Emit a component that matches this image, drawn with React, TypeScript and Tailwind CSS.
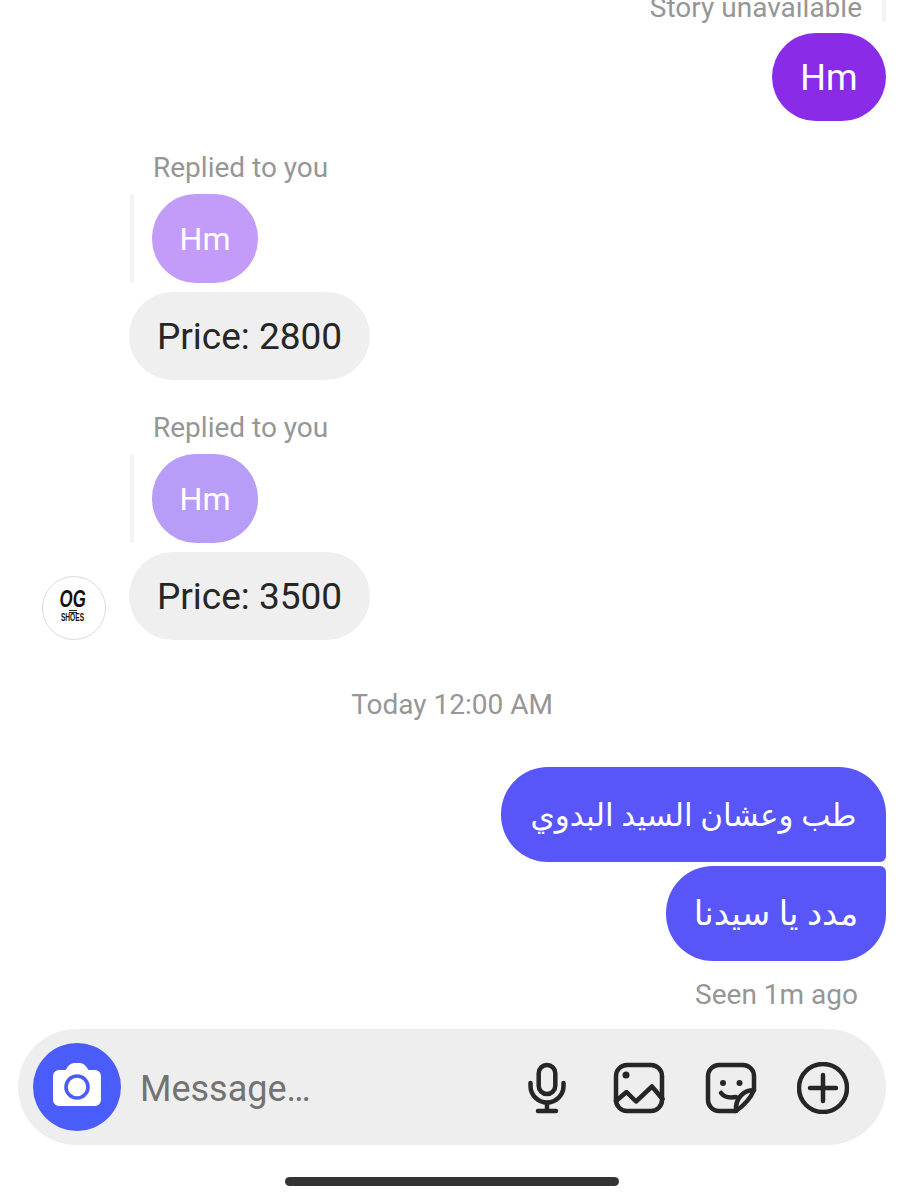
const font = { fontFamily: '"Roboto", "DejaVu Sans", sans-serif' };
const logoFont = { fontFamily: '"Liberation Sans", sans-serif' };

function Mic() {
  return (
    <svg width="52" height="52" viewBox="0 0 52 52" fill="none" stroke="#262626" strokeWidth="4.5" strokeLinecap="round" strokeLinejoin="round">
      <rect x="17.7" y="3" width="16.6" height="29" rx="8.3" />
      <path d="M9.5 21v3a16.5 16.5 0 0 0 33 0v-3" />
      <path d="M26 41v8M17 49h18" />
    </svg>
  );
}
function ImageIcon() {
  return (
    <svg width="52" height="52" viewBox="0 0 52 52" fill="none" stroke="#262626" strokeWidth="4.5" strokeLinecap="round" strokeLinejoin="round">
      <rect x="3" y="3" width="46" height="46" rx="11" />
      <circle cx="13" cy="13" r="3.5" fill="#262626" stroke="none" />
      <path d="M3 39l10.5-9L23 39.5 39 24.5 49.5 37" />
    </svg>
  );
}
function Sticker() {
  return (
    <svg width="52" height="52" viewBox="0 0 52 52" fill="none" stroke="#262626" strokeWidth="4.5" strokeLinecap="round" strokeLinejoin="round">
      <path d="M31 49H14A11 11 0 0 1 3 38V14A11 11 0 0 1 14 3H38A11 11 0 0 1 49 14V28C45 38 38 44 31 49Z" />
      <path d="M49 28C39 28 30 36 31 49" />
      <circle cx="18" cy="21" r="3" fill="#262626" stroke="none" />
      <circle cx="34.5" cy="21" r="3" fill="#262626" stroke="none" />
      <path d="M16 31c3 4 9 5 15 4" />
    </svg>
  );
}
function Plus() {
  return (
    <svg width="52" height="52" viewBox="0 0 52 52" fill="none" stroke="#262626" strokeWidth="4.5" strokeLinecap="round">
      <circle cx="26" cy="26" r="24" />
      <path d="M26 13v26M13 26h26" />
    </svg>
  );
}
function Camera() {
  return (
    <svg width="48" height="48" viewBox="0 0 48 48">
      <path d="M6 7h6.5l2.5-3.5C16.5 1.2 19 0 21.5 0h5c2.5 0 5 1.2 6.5 3.5L35.5 7H42a6 6 0 0 1 6 6v24a6 6 0 0 1-6 6H6a6 6 0 0 1-6-6V13a6 6 0 0 1 6-6Z" fill="#fff" />
      <circle cx="24" cy="24" r="11" fill="#fff" stroke="#4a5dfb" strokeWidth="3.6" />
    </svg>
  );
}

function Replied({ color, price, avatar }: { color: string; price: string; avatar?: boolean }) {
  return (
    <div className="flex items-end">
      <div className="flex w-[129px] justify-end pr-[23px]">
        {avatar && (
          <div className="flex h-[64px] w-[64px] flex-col items-center justify-center rounded-full border border-[#dcdcdc] bg-white pb-[6px] pr-[2px] text-[#111]">
            <span className="scale-x-[0.7] text-[24px] font-bold italic leading-[22px]" style={logoFont}>OG</span>
            <span className="h-[3px] w-[8px] border-y border-[#222]" />
            <span className="scale-x-[0.66] text-[10px] font-bold leading-[10px]" style={logoFont}>SHOES</span>
          </div>
        )}
      </div>
      <div className="flex flex-col items-start">
        <div className="pl-[24px] text-[28px] leading-[30px] text-[#969696]">Replied to you</div>
        <div className="mt-[11px] flex gap-[18px] pl-[1px]">
          <div className="h-[89px] w-[4px] rounded-full bg-[#f3f4f6]" />
          <div className={`flex h-[89px] w-[106px] items-center justify-center rounded-[44px] text-[32px] text-white ${color}`}>Hm</div>
        </div>
        <div className="mt-[9px] flex h-[88px] w-[241px] items-center justify-center rounded-[44px] bg-[#efefef] pt-[2px] text-[37px] text-[#262626]">Price: {price}</div>
      </div>
    </div>
  );
}

export default function App() {
  return (
    <div className="flex h-[1200px] w-[904px] flex-col overflow-hidden bg-white" style={font}>
      <div className="-mt-[7px] flex flex-col items-end pr-[18px]">
        <div className="flex items-start">
          <span className="text-[28px] leading-[30px] text-[#969696]">Story unavailable</span>
          <div className="ml-[20px] h-[29px] w-[4px] bg-[#f3f4f6]" />
        </div>
        <div className="mt-[10px] flex h-[88px] w-[114px] items-center justify-center rounded-[44px] bg-[#8a2be8] pt-[2px] text-[36px] text-white">Hm</div>
      </div>

      <div className="mt-[32px]">
        <Replied color="bg-[#c39bf8]" price="2800" />
      </div>
      <div className="mt-[33px]">
        <Replied color="bg-[#b79cf8]" price="3500" avatar />
      </div>

      <div className="mt-[50px] text-center text-[28px] leading-[30px] text-[#969696]">Today 12:00 AM</div>

      <div className="mt-[47px] flex flex-col items-end gap-[4px] pr-[18px]">
        <div dir="rtl" className="flex h-[95px] w-[385px] items-center justify-center rounded-[47px] rounded-tr-[47px] rounded-br-[6px] bg-[#5856f8] pt-[3px] text-[31px] text-white">طب وعشان السيد البدوي</div>
        <div dir="rtl" className="flex h-[95px] w-[220px] items-center justify-center rounded-[47px] rounded-tr-[6px] bg-[#5856f8] text-[34px] text-white">مدد يا سيدنا</div>
      </div>
      <div className="mt-[19px] pr-[46px] text-right text-[28px] leading-[30px] text-[#969696]">Seen 1m ago</div>

      <div className="ml-[18px] mt-[19px] flex h-[116px] w-[868px] items-center rounded-[58px] bg-[#eeeeee] pl-[15px] pr-[37px]">
        <div className="flex h-[88px] w-[88px] items-center justify-center rounded-full bg-[#4a5dfb]"><Camera /></div>
        <div className="ml-[19px] flex-1 pt-[4px] text-[36px] text-[#737373]">Message…</div>
        <div className="flex items-center gap-[40px] pt-[2px]">
          <Mic />
          <ImageIcon />
          <Sticker />
          <Plus />
        </div>
      </div>
      <div className="ml-[285px] mt-[32px] h-[9px] w-[334px] rounded-full bg-[#333333]" />
    </div>
  );
}
